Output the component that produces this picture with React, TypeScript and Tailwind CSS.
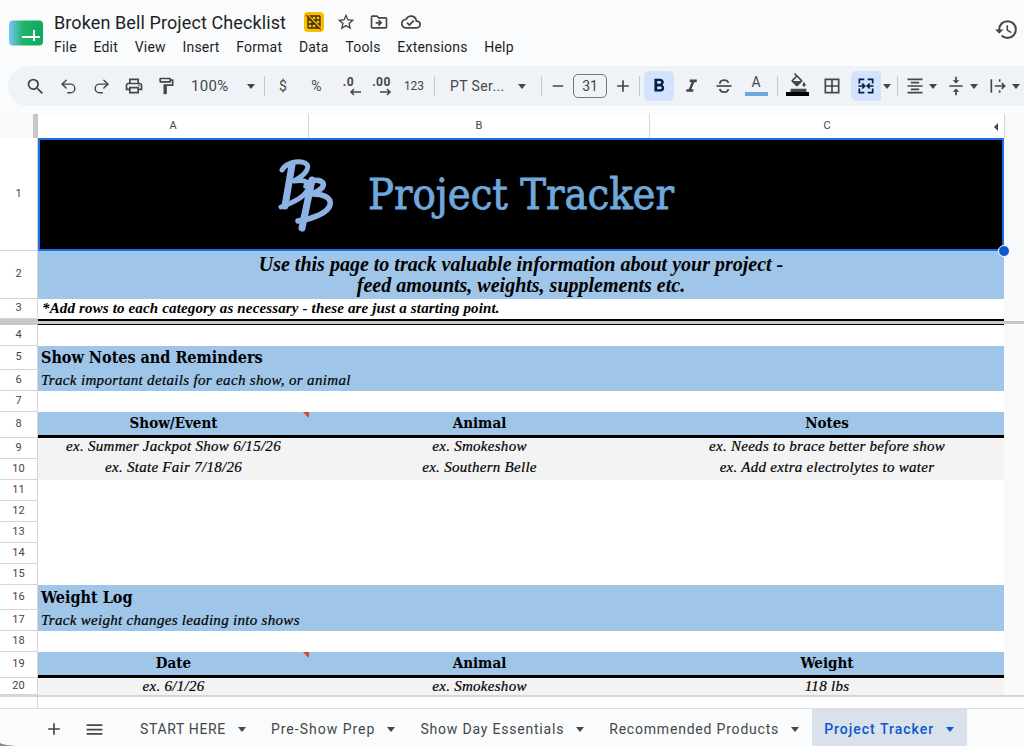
import React from 'react';
import {
  MdSearch, MdOutlinePrint, MdOutlineFormatPaint, MdStarBorder, MdOutlineDriveFileMove,
  MdOutlineCloudDone, MdHistory, MdAdd, MdMenu, MdRemove, MdFormatBold, MdFormatItalic,
  MdBorderAll, MdFormatAlignCenter, MdVerticalAlignCenter, MdOutlineFormatColorFill, MdGridOff,
} from 'react-icons/md';
import { Undo2, Redo2 } from 'lucide-react';

const serif = "font-['Liberation_Serif',serif]";
const slab = "font-['DejaVu_Serif_Condensed','DejaVu_Serif',serif]";
const inkItalic = '[-webkit-text-stroke:0.2px_black]';
const menus = ['File', 'Edit', 'View', 'Insert', 'Format', 'Data', 'Tools', 'Extensions', 'Help'];

const Caret = ({ className = '' }: { className?: string }) => (
  <svg width="10" height="5" viewBox="0 0 10 5" className={className} fill="currentColor">
    <path d="M1 0h8L5 5z" />
  </svg>
);

const Sep = ({ className = '' }: { className?: string }) => <div className={`w-px h-5 bg-[#c7c7c7] ${className}`} />;

const Slot = ({ className = '', children }: { className?: string; children?: React.ReactNode }) => (
  <div className={`h-full flex items-center justify-center shrink-0 ${className}`}>{children}</div>
);

const DecimalIcon = ({ label, right }: { label: string; right?: boolean }) => (
  <div className="flex flex-col items-center leading-none">
    <span className="text-[12px] font-bold leading-[11px] font-['Roboto',sans-serif] tracking-[0.5px]">{label}</span>
    <svg width="14" height="8" viewBox="0 0 14 8" className={right ? 'ml-2' : 'ml-3'} fill="none" stroke="currentColor" strokeWidth="1.5">
      {right ? <path d="M1 4h10M8 1l3 3-3 3" /> : <path d="M13 4H3M6 1L3 4l3 3" />}
    </svg>
  </div>
);

const StrikeIcon = () => (
  <svg width="20" height="20" viewBox="0 0 24 24" fill="none" stroke="currentColor" strokeWidth="2">
    <path d="M7 9.500C7 3.500 17 3.500 17 8.500" />
    <path d="M3 12h18" />
    <path d="M7 15.500C7.500 20.500 17 20.500 17 15.500" />
  </svg>
);

const MergeIcon = () => (
  <svg width="20" height="20" viewBox="0 0 24 24" fill="none" stroke="currentColor" strokeWidth="2">
    <path d="M10 4H4v5M4 15v5h6M14 4h6v5M20 15v5h-6" />
    <path d="M3 12h7M7.500 9l3 3-3 3M21 12h-7M16.500 9l-3 3 3 3" />
  </svg>
);

const WrapIcon = () => (
  <svg width="20" height="20" viewBox="0 0 24 24" fill="none" stroke="currentColor" strokeWidth="2">
    <path d="M4 4v16" />
    <path d="M14 4v3M14 17v3" />
    <path d="M8 12h12M16.500 8.500 20 12l-3.500 3.500" />
  </svg>
);

const Toolbar = () => (
  <div className="mx-0 ml-2 h-10 rounded-l-[20px] bg-[#eff3f8] flex items-center pl-[11px] text-[#444746] font-['Roboto',sans-serif]">
    <Slot className="w-[33px]"><MdSearch size={21} /></Slot>
    <Slot className="w-[33px]"><Undo2 size={19} strokeWidth={1.8} /></Slot>
    <Slot className="w-[32px]"><Redo2 size={19} strokeWidth={1.8} /></Slot>
    <Slot className="w-[33px]"><MdOutlinePrint size={20} /></Slot>
    <Slot className="w-[32px]"><MdOutlineFormatPaint size={20} /></Slot>
    <Slot className="w-[82px] !justify-start pl-[9px]">
      <span className="text-[15px] tracking-[0.3px] w-[55px]">100%</span>
      <Caret />
    </Slot>
    <Sep />
    <Slot className="w-[36px] text-[14px]">$</Slot>
    <Slot className="w-[31px] text-[14px]">%</Slot>
    <Slot className="w-[33px]"><DecimalIcon label=".0" /></Slot>
    <Slot className="w-[33px]"><DecimalIcon label=".00" right /></Slot>
    <Slot className="w-[32px] mr-1 text-[12px]">123</Slot>
    <Sep />
    <Slot className="w-[106px] !justify-start pl-[15px]">
      <span className="text-[14px] tracking-[0.4px] w-[67px]">PT Ser...</span>
      <Caret />
    </Slot>
    <Sep />
    <Slot className="w-[31px]"><MdRemove size={18} /></Slot>
    <div className="w-[34px] h-6 rounded-[5px] border border-[#747775] flex items-center justify-center text-[14px] shrink-0">31</div>
    <Slot className="w-[32px]"><MdAdd size={20} /></Slot>
    <Sep />
    <div className="ml-1 w-[30px] h-[30px] rounded-[5px] bg-[#d3e3fd] flex items-center justify-center text-[#041e49] shrink-0">
      <MdFormatBold size={22} />
    </div>
    <Slot className="w-[34px]"><MdFormatItalic size={21} /></Slot>
    <Slot className="w-[31px]"><StrikeIcon /></Slot>
    <Slot className="w-[34px] relative">
      <span className="text-[14px] leading-none -mt-2">A</span>
      <div className="absolute left-[6px] bottom-[10px] w-[23px] h-1 bg-[#6fa8dc]" />
    </Slot>
    <Sep className="ml-1" />
    <Slot className="w-[40px] relative">
      <MdOutlineFormatColorFill size={19} className="-mt-2" />
      <div className="absolute left-[8px] bottom-[10px] w-[23px] h-1 bg-black" />
    </Slot>
    <Slot className="w-[28px]"><MdBorderAll size={20} /></Slot>
    <div className="ml-[5px] w-[30px] h-[30px] rounded-l-[5px] bg-[#d3e3fd] flex items-center justify-center text-[#041e49] shrink-0">
      <MergeIcon />
    </div>
    <Slot className="w-[12px]"><Caret /></Slot>
    <Sep className="ml-1" />
    <Slot className="w-[26px] ml-1"><MdFormatAlignCenter size={20} /></Slot>
    <Slot className="w-[10px]"><Caret /></Slot>
    <Slot className="w-[26px] ml-[5px]"><MdVerticalAlignCenter size={20} /></Slot>
    <Slot className="w-[10px]"><Caret /></Slot>
    <Slot className="w-[26px] ml-[6px]"><WrapIcon /></Slot>
    <Slot className="w-[10px]"><Caret /></Slot>
  </div>
);

const SheetsLogo = () => (
  <svg width="36" height="26" viewBox="0 0 36 26" className="shrink-0">
    <defs>
      <linearGradient id="sheetGrad" x1="0" x2="1" y1="0" y2="0">
        <stop offset="0" stopColor="#7cc6f6" />
        <stop offset="0.4" stopColor="#1fb56c" />
        <stop offset="1" stopColor="#0fa958" />
      </linearGradient>
    </defs>
    <rect x="1" y="0.500" width="34" height="25" rx="4" fill="url(#sheetGrad)" />
    <path d="M14 17h18M26 10v11" stroke="#fff" strokeWidth="1.800" fill="none" />
  </svg>
);

const Logo = () => (
  <svg width="70" height="90" viewBox="0 0 70 90" className="absolute left-[232px] top-[12px]" fill="none" stroke="#8db3e4" strokeLinecap="round" strokeLinejoin="round">
    <path d="M12 20C16 13 27 10 35 13 41 16 37 24 24 31 36 29 42 33 37 41 33 48 22 53 11 57" strokeWidth="5" />
    <path d="M22 15 15 56" strokeWidth="7" />
    <path d="M36 36C40 29 50 29 53 33 55 37 49 41 42 44 52 44 62 47 60 55 58 63 42 69 28 71" strokeWidth="5.500" />
    <path d="M42 30 32 78" strokeWidth="7" />
  </svg>
);

const Flag = () => <div className="absolute right-0 top-0 w-0 h-0 border-t-[6px] border-t-[#e53935] border-l-[6px] border-l-transparent" />;

const Row = ({ num, h, children }: { num?: number; h: string; children?: React.ReactNode }) => (
  <div className={`flex ${h}`}>
    <div className="w-[38px] shrink-0 border-r-[1.5px] border-b border-[#d5d5d5] flex items-center justify-center text-[11px] text-[#444] font-['Roboto',sans-serif] bg-white">
      {num}
    </div>
    <div className="w-[966px] shrink-0 bg-white relative">{children}</div>
    <div className="flex-1 bg-[#f8f9f9]" />
  </div>
);

const Band = ({ className = '', children }: { className?: string; children: React.ReactNode }) => (
  <div className={`h-full bg-[#9fc5e8] pl-[3px] flex items-center text-black ${className}`}>{children}</div>
);

const TableHead = ({ labels }: { labels: string[] }) => (
  <div className={`h-full grid grid-cols-[271px_341px_354px] bg-[#9fc5e8] border-b-[3px] border-black text-black ${slab}`}>
    {labels.map((label, i) => (
      <div key={label} className="relative flex items-center justify-center text-[15px] font-bold">
        {label}
        {i === 0 && <Flag />}
      </div>
    ))}
  </div>
);

const DataRow = ({ cells }: { cells: string[] }) => (
  <div className={`h-full grid grid-cols-[271px_341px_354px] bg-[#f3f3f3] text-black italic ${serif} ${inkItalic}`}>
    {cells.map(cell => (
      <div key={cell} className="flex items-center justify-center pb-[5px] leading-[16px] text-[15px] tracking-[0.28px]">{cell}</div>
    ))}
  </div>
);

const Tab = ({ label, active, className = 'tracking-[0.85px]' }: { label: string; active?: boolean; className?: string }) => (
  <div className={`h-full flex items-center shrink-0 px-3 pt-[3px] text-[14px] ${className} ${active ? 'bg-[#d9e1ea] text-[#0b57d0] font-medium' : 'text-[#444746]'}`}>
    <span>{label}</span>
    <Caret className="ml-[11px]" />
  </div>
);

export default function App() {
  return (
    <div className="w-[1024px] h-[746px] overflow-hidden flex flex-col bg-[#f9fbfd] font-['Roboto',sans-serif] relative">
      {/* Title and menu bar */}
      <div className="h-[66px] flex items-start pl-2 pt-[20px] shrink-0 relative">
        <SheetsLogo />
        <div className="ml-[10px] -mt-[11px]">
          <div className="flex items-center h-[26px]">
            <span className="text-[18px] text-[#1f1f1f] tracking-[0.1px]">Broken Bell Project Checklist</span>
            <div className="ml-[18px] w-5 h-5 rounded-[4px] bg-[#fbbc04] flex items-center justify-center text-[#3c3000]"><MdGridOff size={16} /></div>
            <MdStarBorder size={20} className="ml-[12px] text-[#444746]" />
            <MdOutlineDriveFileMove size={20} className="ml-[13px] text-[#444746]" />
            <MdOutlineCloudDone size={20} className="ml-[12px] text-[#444746]" />
          </div>
          <div className="flex gap-[16.700px] text-[14px] text-[#1f1f1f] tracking-[0.2px] leading-[20px] mt-[2px]">
            {menus.map(m => <span key={m}>{m}</span>)}
          </div>
        </div>
        <MdHistory size={25} className="absolute left-[994px] top-[17px] text-[#444746]" />
      </div>

      <Toolbar />
      <div className="h-2 shrink-0" />

      {/* Column headers */}
      <div className="flex h-6 shrink-0">
        <div className="w-[38px] shrink-0 bg-[#f8f9fa] border-r-[5px] border-[#c7c7c7]" />
        <div className="w-[966px] shrink-0 grid grid-cols-[271px_341px_354px] bg-white text-[11px] text-[#444]">
          <div className="flex items-center justify-center border-r border-[#d5d5d5]">A</div>
          <div className="flex items-center justify-center border-r border-[#d5d5d5]">B</div>
          <div className="flex items-center justify-center relative">
            C
            <div className="absolute right-[6px] top-[9px] w-0 h-0 border-y-[4px] border-y-transparent border-r-[4px] border-r-[#444]" />
          </div>
        </div>
        <div className="flex-1 border-l border-[#d5d5d5] bg-[#f8f9f9]" />
      </div>

      {/* Sheet */}
      <div className="flex-1 flex flex-col min-h-0">
        <Row num={1} h="h-[113px]">
          <div className={`h-full bg-black border-2 border-[#1a6fe8] flex items-center justify-center text-[#6fa8dc] text-[43px] [-webkit-text-stroke:0.8px_#6fa8dc] ${slab}`}>
            Project Tracker
          </div>
          <Logo />
          <div className="absolute -right-[6px] -bottom-[6px] z-10 w-3 h-3 rounded-full bg-[#0b57d0] border border-white" />
        </Row>
        <Row num={2} h="h-[48px]">
          <div className={`h-full bg-[#9fc5e8] flex items-center justify-center text-center text-black font-bold italic text-[20px] leading-[21px] ${serif}`}>
            <div>Use this page to track valuable information about your project -<br />feed amounts, weights, supplements etc.</div>
          </div>
        </Row>
        <Row num={3} h="h-[20px]">
          <div className={`h-full pl-[4px] pb-[2px] flex items-center italic font-bold text-[15px] tracking-[0.15px] text-black ${serif}`}>
            *Add rows to each category as necessary - these are just a starting point.
          </div>
        </Row>
        {/* frozen row divider */}
        <div className="flex h-[2px] shrink-0">
          <div className="w-[38px] bg-[#c7c7c7]" />
          <div className="w-[966px] bg-black" />
          <div className="flex-1 bg-[#f8f9f9]" />
        </div>
        <div className="h-[3px] bg-[#c7c7c7] shrink-0" />
        <div className="flex h-px shrink-0">
          <div className="w-[38px] bg-[#c7c7c7]" />
          <div className="w-[966px] bg-black" />
          <div className="flex-1 bg-[#f8f9f9]" />
        </div>
        <Row num={4} h="h-[21px]" />
        <Row num={5} h="h-[24px]">
          <Band className={`text-[16px] font-bold ${slab}`}>Show Notes and Reminders</Band>
        </Row>
        <Row num={6} h="h-[21px]">
          <Band className={`text-[15px] italic tracking-[0.33px] ${serif} ${inkItalic}`}>Track important details for each show, or animal</Band>
        </Row>
        <Row num={7} h="h-[21px]" />
        <Row num={8} h="h-[26px]"><TableHead labels={['Show/Event', 'Animal', 'Notes']} /></Row>
        <Row num={9} h="h-[21px]"><DataRow cells={['ex. Summer Jackpot Show 6/15/26', 'ex. Smokeshow', 'ex. Needs to brace better before show']} /></Row>
        <Row num={10} h="h-[21px]"><DataRow cells={['ex. State Fair 7/18/26', 'ex. Southern Belle', 'ex. Add extra electrolytes to water']} /></Row>
        <Row num={11} h="h-[21px]" />
        <Row num={12} h="h-[21px]" />
        <Row num={13} h="h-[21px]" />
        <Row num={14} h="h-[21px]" />
        <Row num={15} h="h-[21px]" />
        <Row num={16} h="h-[25px]">
          <Band className={`text-[16px] font-bold ${slab}`}>Weight Log</Band>
        </Row>
        <Row num={17} h="h-[21px]">
          <Band className={`text-[15px] italic tracking-[0.3px] ${serif} ${inkItalic}`}>Track weight changes leading into shows</Band>
        </Row>
        <Row num={18} h="h-[21px]" />
        <Row num={19} h="h-[26px]"><TableHead labels={['Date', 'Animal', 'Weight']} /></Row>
        <Row num={20} h="h-[17px]"><DataRow cells={['ex. 6/1/26', 'ex. Smokeshow', '118 lbs']} /></Row>
        <div className="h-[2px] bg-[#d5d5d5] shrink-0" />
        <div className="flex-1 bg-white flex">
          <div className="w-[38px] border-r-[1.5px] border-[#d5d5d5]" />
        </div>
      </div>

      {/* Sheet tabs */}
      <div className="h-[38px] shrink-0 border-t border-[#dadce0] bg-[#f9fbfd] flex items-center text-[#444746]">
        <Slot className="w-[36px] ml-[36px] pt-[3px]"><MdAdd size={20} /></Slot>
        <Slot className="w-[44px] pt-[3px]"><MdMenu size={21} /></Slot>
        <div className="w-[12px] shrink-0" />
        <div className="h-full flex">
          <Tab label="START HERE" className="tracking-[0.65px]" />
          <Tab label="Pre-Show Prep" className="tracking-[1px]" />
          <Tab label="Show Day Essentials" className="tracking-[0.8px]" />
          <Tab label="Recommended Products" className="tracking-[0.8px]" />
          <Tab label="Project Tracker" active className="tracking-[1px]" />
        </div>
      </div>
      <svg width="16" height="3" viewBox="0 0 16 3" className="absolute left-0 bottom-0">
        <path d="M0 0C4 2 9 2.500 16 3H0z" fill="#8a8a90" />
      </svg>
    </div>
  );
}
